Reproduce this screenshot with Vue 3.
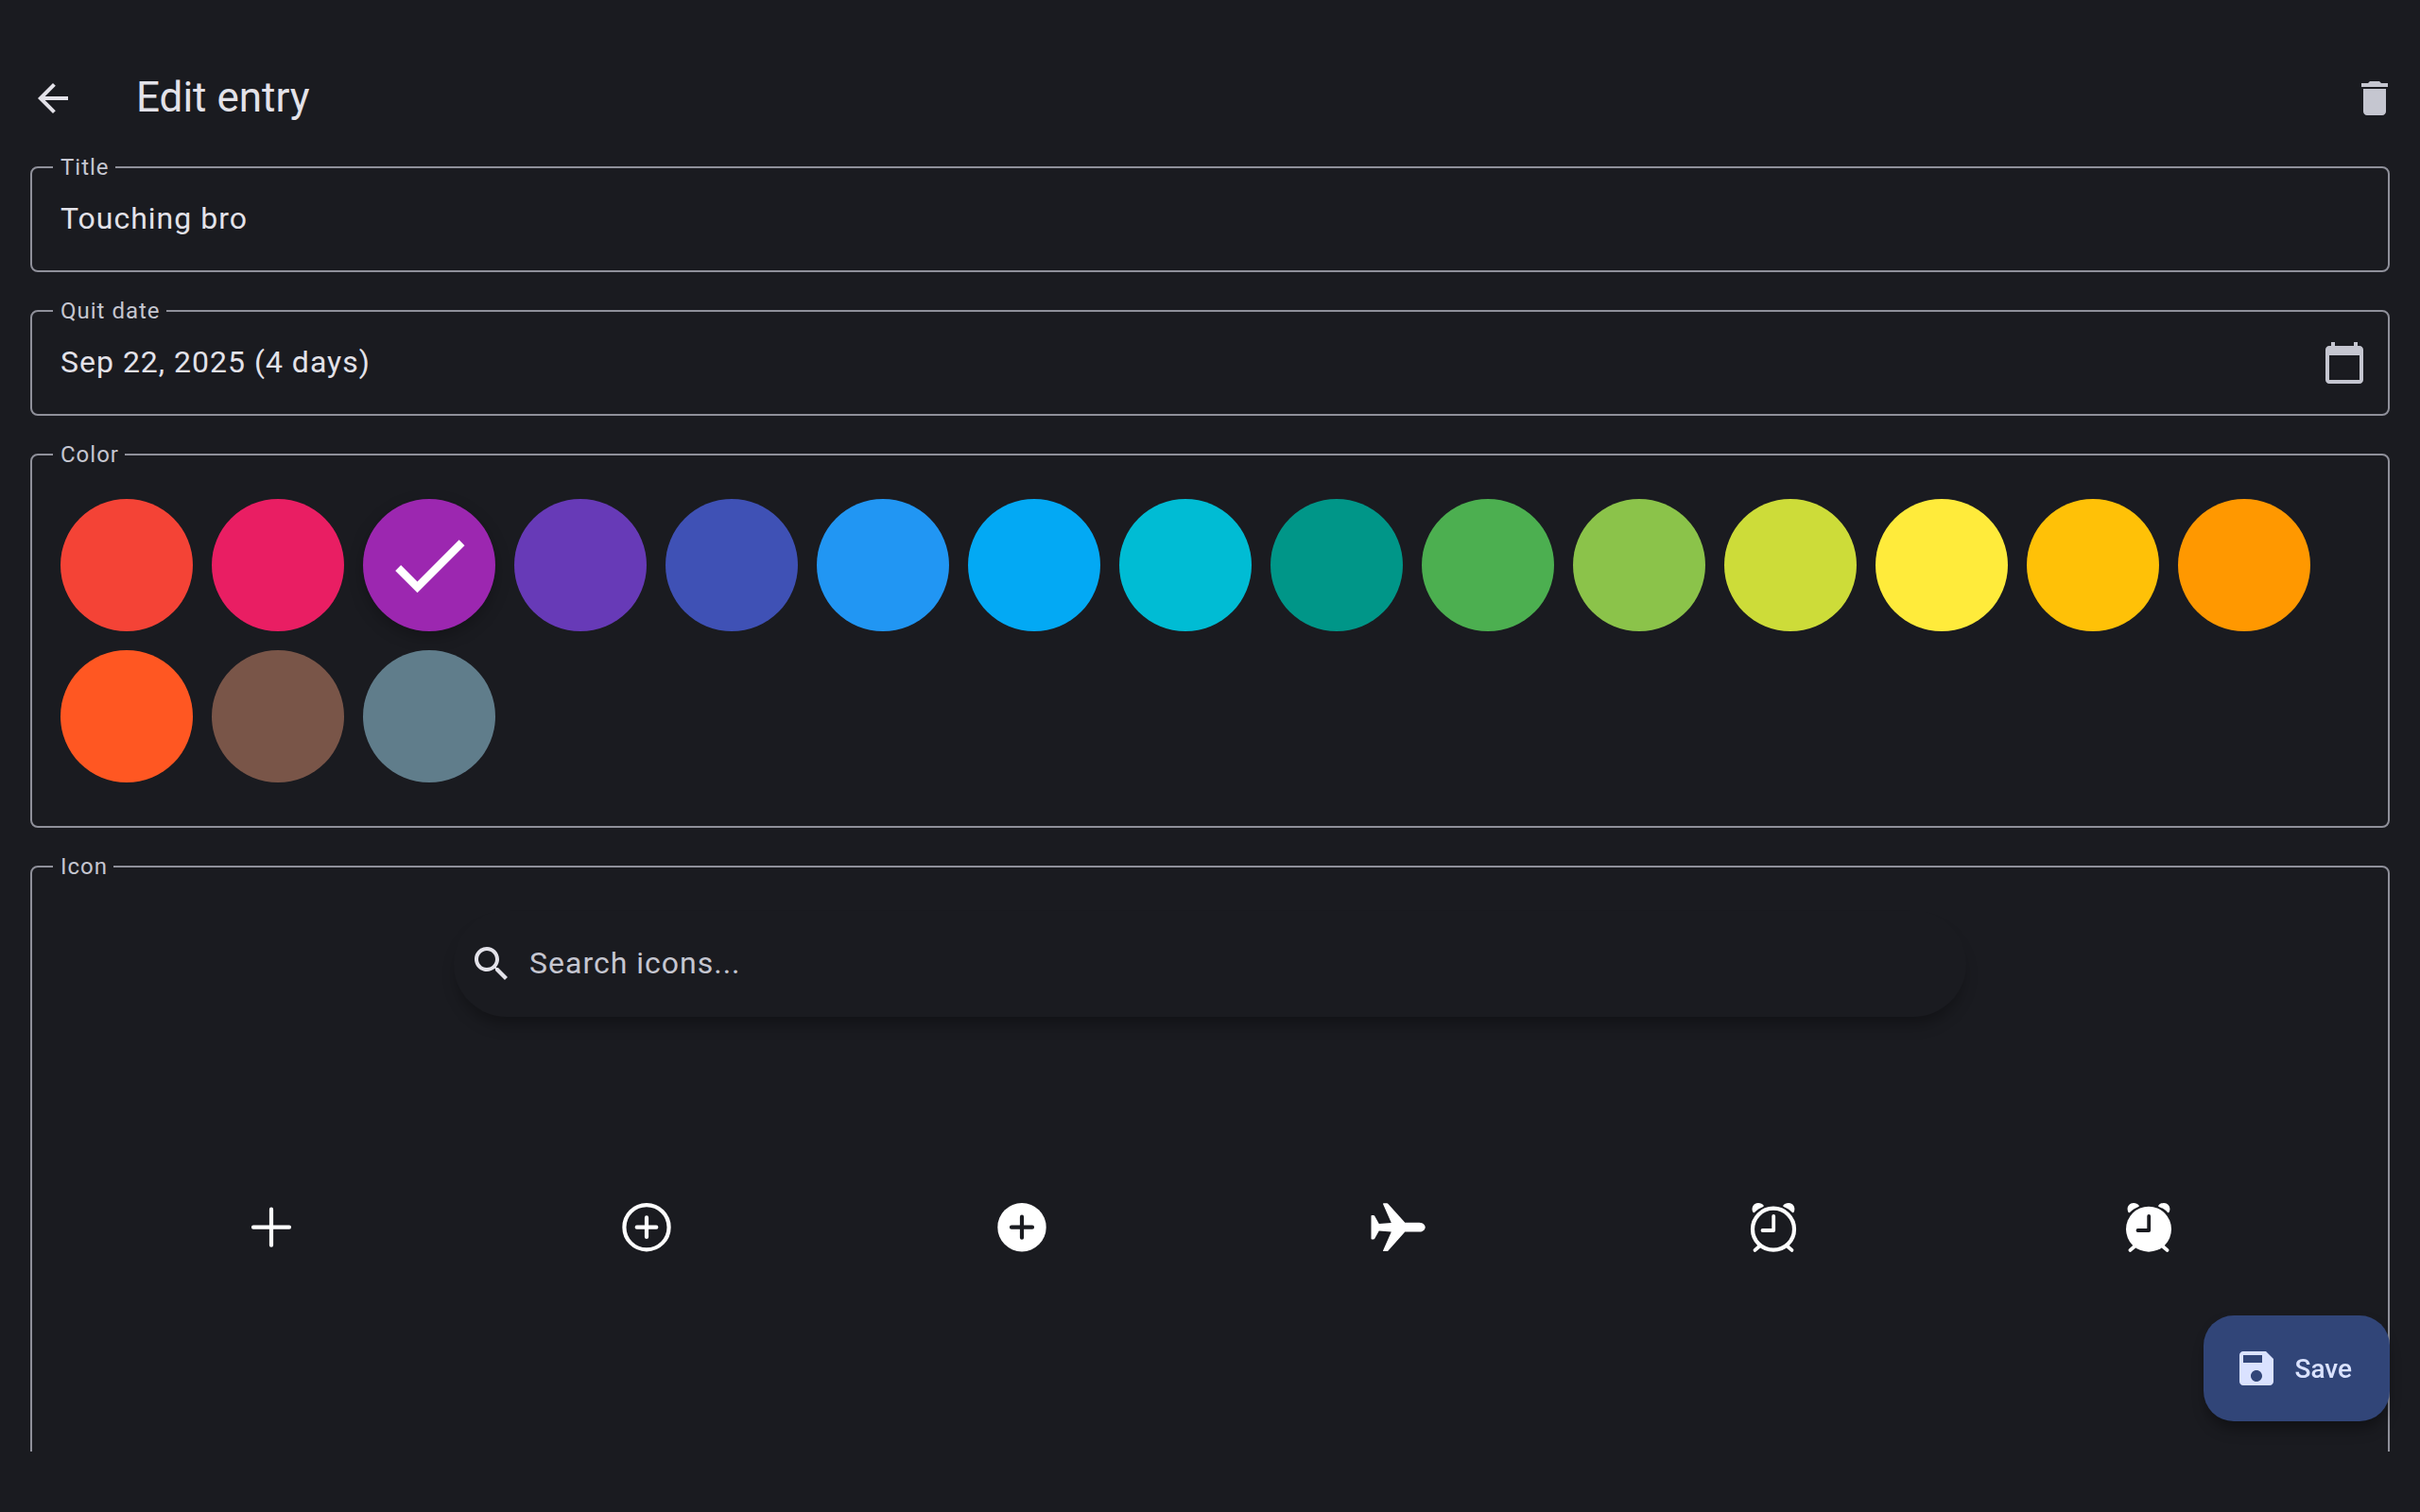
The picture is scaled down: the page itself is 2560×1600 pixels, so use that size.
<script setup>
import { ref } from 'vue'

const title = ref('Touching bro')
const quitDate = ref('Sep 22, 2025 (4 days)')
const query = ref('')

const colors = [
  { name: 'Red', value: '#f44336' },
  { name: 'Pink', value: '#e91e63' },
  { name: 'Purple', value: '#9c27b0' },
  { name: 'Deep purple', value: '#673ab7' },
  { name: 'Indigo', value: '#3f51b5' },
  { name: 'Blue', value: '#2196f3' },
  { name: 'Light blue', value: '#03a9f4' },
  { name: 'Cyan', value: '#00bcd4' },
  { name: 'Teal', value: '#009688' },
  { name: 'Green', value: '#4caf50' },
  { name: 'Light green', value: '#8bc34a' },
  { name: 'Lime', value: '#cddc39' },
  { name: 'Yellow', value: '#ffeb3b' },
  { name: 'Amber', value: '#ffc107' },
  { name: 'Orange', value: '#ff9800' },
  { name: 'Deep orange', value: '#ff5722' },
  { name: 'Brown', value: '#795548' },
  { name: 'Blue grey', value: '#607d8b' },
]
const selected = ref('#9c27b0')
</script>

<template>
  <div class="screen">
    <header class="app-bar">
      <button class="icon-button" type="button" aria-label="Back">
        <svg class="icon" viewBox="0 0 24 24"><path d="M20 11H7.83l5.59-5.59L12 4l-8 8 8 8 1.41-1.41L7.83 13H20v-2z" /></svg>
      </button>
      <h1>Edit entry</h1>
      <button class="icon-button muted" type="button" aria-label="Delete">
        <svg class="icon" viewBox="0 0 24 24"><path d="M6 19c0 1.1.9 2 2 2h8c1.1 0 2-.9 2-2V7H6v12zM19 4h-3.5l-1-1h-5l-1 1H5v2h14V4z" /></svg>
      </button>
    </header>

    <main class="form">
      <fieldset class="outlined">
        <legend><label for="title">Title</label></legend>
        <div class="field-row">
          <input id="title" v-model="title" class="field-input" type="text" />
        </div>
      </fieldset>

      <fieldset class="outlined">
        <legend><label for="quit-date">Quit date</label></legend>
        <div class="field-row">
          <input id="quit-date" class="field-input" type="text" :value="quitDate" readonly />
          <button class="icon-button muted" type="button" aria-label="Pick date">
            <svg class="icon" viewBox="0 0 24 24"><path d="M20 3h-1V1h-2v2H7V1H5v2H4c-1.1 0-2 .9-2 2v16c0 1.1.9 2 2 2h16c1.1 0 2-.9 2-2V5c0-1.1-.9-2-2-2zm0 18H4V8h16v13z" /></svg>
          </button>
        </div>
      </fieldset>

      <fieldset class="outlined">
        <legend>Color</legend>
        <div class="swatches">
          <label v-for="color in colors" :key="color.value" class="swatch">
            <input
              v-model="selected"
              type="radio"
              name="color"
              :value="color.value"
              :aria-label="color.name"
              :style="{ backgroundColor: color.value }"
            />
            <svg v-if="selected === color.value" class="tick" viewBox="0 0 24 24"><path d="M9 16.17L4.83 12l-1.42 1.41L9 19 21 7l-1.41-1.41z" /></svg>
          </label>
        </div>
      </fieldset>

      <fieldset class="outlined">
        <legend>Icon</legend>
        <div class="icon-picker">
          <label class="search">
            <svg class="icon" viewBox="0 0 24 24"><path d="M15.5 14h-.79l-.28-.27C15.41 12.59 16 11.11 16 9.5 16 5.91 13.09 3 9.5 3S3 5.91 3 9.5 5.91 16 9.5 16c1.61 0 3.09-.59 4.23-1.57l.27.28v.79l5 4.99L20.49 19l-4.99-5zm-6 0C7.01 14 5 11.99 5 9.5S7.01 5 9.5 5 14 7.01 14 9.5 11.99 14 9.5 14z" /></svg>
            <input v-model="query" class="field-input" type="text" placeholder="Search icons..." aria-label="Search icons" />
          </label>

          <div class="icon-grid">
            <button type="button" aria-label="Add">
              <svg class="glyph" viewBox="0 0 60 60"><path class="line" d="M30 10.7v38M11 29.7h38" /></svg>
            </button>
            <button type="button" aria-label="Add circled">
              <svg class="glyph" viewBox="0 0 60 60">
                <circle class="line" cx="30" cy="29.7" r="23.6" />
                <path class="line" d="M30 19.4v20.600M19.700 29.700h20.600" />
              </svg>
            </button>
            <button type="button" aria-label="Add circled solid">
              <svg class="glyph" viewBox="0 0 60 60">
                <circle cx="30" cy="29.7" r="25.7" />
                <path class="line cut" d="M30 18.7v22M19 29.7h22" />
              </svg>
            </button>
            <button type="button" aria-label="Airplane">
              <svg class="glyph" viewBox="0 0 60 60">
                <path d="M1.5 17.6Q1.5 17 2.2 17H4q.8 0 1.2.7L9.8 26l13-1L14.1 5.2q-.3-.9.6-.9h3.4q.9 0 1.4.6L37.3 24.8H52.5c4 0 6.2 3 6.2 4.900s-2.200 4.900-6.200 4.900H37.300L19.500 54.500q-.5.600-1.400.600h-3.400q-.9 0-.6-.9L22.800 34.400l-13-1L5.200 41.700q-.4.700-1.200.700H2.200q-.7 0-.7-.6z" />
              </svg>
            </button>
            <button type="button" aria-label="Alarm">
              <svg class="glyph" viewBox="0 0 60 60">
                <circle class="line" cx="30" cy="31.7" r="22" />
                <path class="line thin" d="M30.2 18v15H18.5M14.7 50.3l-4.200 3.600M45.300 50.300l4.200 3.600" />
                <path d="M8.6 14C6 10 8.5 4 14 4c2.500 0 4.500 1 5.600 2.600.4.600.2 1-.4 1.300C15.500 9.400 12.500 11.200 10 13.900c-.5.500-1 .6-1.400.1zM51.400 14C54 10 51.500 4 46 4c-2.500 0-4.500 1-5.600 2.600-.4.600-.2 1 .4 1.300 3.700 1.500 6.700 3.300 9.200 6 .5.500 1 .6 1.400.1z" />
              </svg>
            </button>
            <button type="button" aria-label="Alarm solid">
              <svg class="glyph" viewBox="0 0 60 60">
                <circle cx="30" cy="31.7" r="24" />
                <path class="line thin" d="M14.7 50.3l-4.200 3.600M45.300 50.300l4.200 3.600" />
                <path class="line thin cut" d="M30.2 18v15H18.5" />
                <path d="M8.6 14C6 10 8.5 4 14 4c2.500 0 4.500 1 5.600 2.600.4.600.2 1-.4 1.300C15.500 9.400 12.500 11.200 10 13.900c-.5.500-1 .6-1.400.1zM51.400 14C54 10 51.500 4 46 4c-2.500 0-4.500 1-5.600 2.600-.4.600-.2 1 .4 1.300 3.700 1.500 6.700 3.300 9.200 6 .5.500 1 .6 1.400.1z" />
              </svg>
            </button>
          </div>
        </div>
      </fieldset>
    </main>

    <button class="save" type="button">
      <svg class="icon" viewBox="0 0 24 24"><path d="M17 3H5c-1.11 0-2 .9-2 2v14c0 1.1.89 2 2 2h14c1.1 0 2-.9 2-2V7l-4-4zm-5 16c-1.66 0-3-1.34-3-3s1.34-3 3-3 3 1.34 3 3-1.34 3-3 3zm3-10H5V5h10v4z" /></svg>
      <span>Save</span>
    </button>
  </div>
</template>

<style>
body {
  background: #1a1b20;
}
</style>

<style scoped>
.screen {
  --surface: #1a1b20;
  --on-surface: #e3e2e9;
  --on-surface-variant: #c5c6d0;
  --outline: #8f909a;
  box-sizing: border-box;
  display: flex;
  flex-direction: column;
  height: 100vh;
  padding: 48px 0 64px;
  background: var(--surface);
  color: var(--on-surface);
  font-family: Roboto, "Noto Sans", sans-serif;
}

button,
input {
  margin: 0;
  padding: 0;
  border: 0;
  background: none;
  color: inherit;
  font: inherit;
  outline: none;
}

button {
  cursor: pointer;
}

svg {
  display: block;
  fill: currentColor;
}

.icon {
  flex: none;
  width: 48px;
  height: 48px;
}

.icon-button {
  flex: none;
  width: 48px;
  height: 48px;
}

.muted {
  color: var(--on-surface-variant);
}

.app-bar {
  flex: none;
  display: flex;
  align-items: center;
  gap: 64px;
  height: 112px;
  padding: 0 24px 0 32px;
}

h1 {
  flex: 1;
  margin: 0;
  padding-bottom: 2px;
  font-size: 44px;
  line-height: 56px;
  font-weight: 400;
}

.form {
  flex: 1;
  min-height: 0;
  display: flex;
  flex-direction: column;
  gap: 24px;
  padding: 0 32px;
  overflow-y: auto;
  scrollbar-width: none;
}

.outlined {
  flex: none;
  min-width: 0;
  margin: 0;
  padding: 0;
  border: 2px solid var(--outline);
  border-radius: 8px;
}

legend {
  margin-left: 22px;
  padding: 0 6px 0 8px;
  color: var(--on-surface-variant);
  font-size: 24px;
  line-height: 34px;
  letter-spacing: 1px;
}

.field-row {
  display: flex;
  align-items: center;
  height: 76px;
  padding: 0 22px 16px 30px;
}

.field-input {
  flex: 1;
  min-width: 0;
  height: 48px;
  padding-bottom: 2px;
  font-size: 32px;
  letter-spacing: 1px;
}

.field-input::placeholder {
  color: var(--on-surface-variant);
  opacity: 1;
}

.swatches {
  display: flex;
  flex-wrap: wrap;
  gap: 20px;
  padding: 30px 30px 46px;
}

.swatch {
  display: grid;
  place-items: center;
}

.swatch > * {
  grid-area: 1 / 1;
}

.swatch input {
  appearance: none;
  width: 140px;
  height: 140px;
  border-radius: 50%;
  cursor: pointer;
}

.swatch input:checked {
  box-shadow: 0 6px 16px rgba(0, 0, 0, 0.25);
}

.tick {
  width: 100px;
  height: 100px;
  color: #fff;
  pointer-events: none;
}

.icon-picker {
  display: flex;
  flex-direction: column;
  align-items: center;
  gap: 24px;
  padding: 30px 54px 64px;
}

.search {
  box-sizing: border-box;
  display: flex;
  align-items: center;
  gap: 16px;
  width: 100%;
  max-width: 1600px;
  height: 112px;
  padding: 0 16px;
  border-radius: 56px;
  box-shadow: 0 12px 16px -4px rgba(0, 0, 0, 0.3);
}

.icon-grid {
  display: grid;
  grid-template-columns: repeat(6, 1fr);
  width: 100%;
}

.icon-grid button {
  display: grid;
  place-items: center;
  aspect-ratio: 1;
  color: #fff;
}

.glyph {
  width: 60px;
  height: 60px;
}

.line {
  fill: none;
  stroke: currentColor;
  stroke-width: 4.2;
  stroke-linecap: round;
  stroke-linejoin: round;
}

.thin {
  stroke-width: 3.8;
}

.cut {
  stroke: var(--surface);
}

.save {
  position: fixed;
  right: 32px;
  bottom: 96px;
  display: flex;
  align-items: center;
  gap: 16px;
  height: 112px;
  padding: 0 40px 0 32px;
  border-radius: 32px;
  background: #314578;
  color: #dae2ff;
  font-size: 28px;
  line-height: 40px;
  font-weight: 500;
  box-shadow: 0 12px 16px -4px rgba(0, 0, 0, 0.3), 0 4px 12px rgba(0, 0, 0, 0.1);
}

.save span {
  padding-top: 2px;
}
</style>
